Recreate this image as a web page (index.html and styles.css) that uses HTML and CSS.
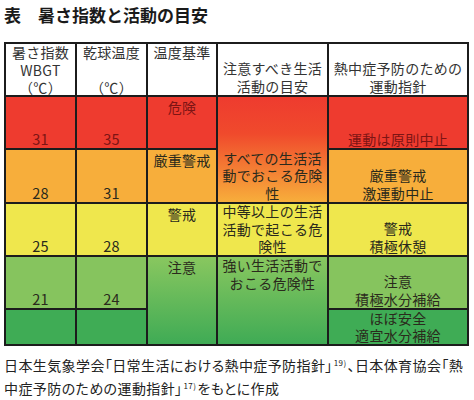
FILE: index.html
```html
<!DOCTYPE html>
<html lang="ja">

<head>
    <meta charset="UTF-8" />
    <meta name="viewport" content="width=device-width, initial-scale=1.0" />
    <title>暑さ指数と活動の目安</title>
    <link rel="stylesheet" href="styles.css">
</head>

<body>
    <h1 class="title">表　暑さ指数と活動の目安</h1>

    <div class="wbgt-table">
        <!-- header -->
        <div class="cell head">暑さ指数<br>WBGT<br>（℃）</div>
        <div class="cell head">乾球温度<br><br>（℃）</div>
        <div class="cell head top">温度基準</div>
        <div class="cell head bottom">注意すべき生活<br>活動の目安</div>
        <div class="cell head bottom">熱中症予防のための<br>運動指針</div>

        <!-- 危険 -->
        <div class="cell num red">31</div>
        <div class="cell num red">35</div>
        <div class="cell level red">危険</div>
        <div class="cell life red-orange">すべての生活活<br>動でおこる危険<br>性</div>
        <div class="cell guide red">運動は原則中止</div>

        <!-- 厳重警戒 -->
        <div class="cell num orange">28</div>
        <div class="cell num orange">31</div>
        <div class="cell level orange">厳重警戒</div>
        <div class="cell guide orange">厳重警戒<br>激運動中止</div>

        <!-- 警戒 -->
        <div class="cell num yellow">25</div>
        <div class="cell num yellow">28</div>
        <div class="cell level yellow">警戒</div>
        <div class="cell life middle yellow">中等以上の生活<br>活動で起こる危<br>険性</div>
        <div class="cell guide yellow">警戒<br>積極休憩</div>

        <!-- 注意 -->
        <div class="cell num lgreen">21</div>
        <div class="cell num lgreen">24</div>
        <div class="cell level green-span">注意</div>
        <div class="cell life top green-span">強い生活活動で<br>おこる危険性</div>
        <div class="cell guide lgreen">注意<br>積極水分補給</div>

        <!-- ほぼ安全 -->
        <div class="cell dgreen"></div>
        <div class="cell dgreen"></div>
        <div class="cell guide dgreen">ほぼ安全<br>適宜水分補給</div>
    </div>

    <p class="source">
        <span class="line">日本生気象学会「日常生活における熱中症予防指針」<sup class="ref">19)</sup>、日本体育協会「熱</span>
        <span class="line">中症予防のための運動指針」<sup class="ref">17)</sup>をもとに作成</span>
    </p>
</body>

</html>
```

FILE: styles.css
```css
body {
    font-family: "Noto Sans CJK JP", "Noto Sans", sans-serif;
    background: #fff;
    color: #222;
    margin: 0;
    padding: 0;
}

.title {
    font-size: 17px;
    font-weight: bold;
    line-height: 24px;
    margin: 3px 0 0 4px;
    color: #1a1a1a;
}

.wbgt-table {
    display: inline-grid;
    grid-template-columns: 69px 69px 68px 109px 138px;
    grid-template-rows: 51px 51px 52px 51px 51px 34px;
    gap: 2px;
    padding: 2px;
    margin: 15px 0 0 4px;
    background: #1c1c1c;
}

.cell {
    display: flex;
    flex-direction: column;
    align-items: center;
    text-align: center;
    font-size: 14px;
    line-height: 17.5px;
    letter-spacing: 0.3px;
    color: #2a2a1c;
    white-space: nowrap;
}

.head {
    background: #fff;
    color: #333;
}

.head.top {
    justify-content: flex-start;
}

.head.bottom,
.num,
.guide {
    justify-content: flex-end;
}

.num {
    line-height: 16px;
    padding-bottom: 1px;
    font-size: 14.5px;
}

.level {
    justify-content: flex-start;
    padding-top: 2px;
}

.life {
    justify-content: flex-end;
}

.life.middle {
    justify-content: center;
}

.life.top {
    justify-content: flex-start;
}

.guide.dgreen {
    line-height: 17px;
}

/* row colours */
.red {
    background: #ee3b2f;
    color: #7d1414;
}

.orange {
    background: #f7ae3b;
}

.yellow {
    background: #efe74d;
}

.lgreen {
    background: #86c45e;
}

.dgreen {
    background: #3fac55;
}

.red-orange {
    grid-row: span 2;
    background: linear-gradient(to bottom, #ee3b2f 0%, #f04a2c 35%, #f7ae3b 100%);
}

.green-span {
    grid-row: span 2;
    background: linear-gradient(to bottom, #89c75f 0%, #3fab55 100%);
}

.source {
    margin: 8px 0 0 4px;
    font-size: 14px;
    line-height: 23px;
    color: #222;
    font-feature-settings: "palt";
}

.source .line {
    display: block;
    white-space: nowrap;
    letter-spacing: 0.4px;
}

.ref {
    font-size: 8px;
    vertical-align: 5px;
    line-height: 0;
    margin: 0 1px;
}
```
